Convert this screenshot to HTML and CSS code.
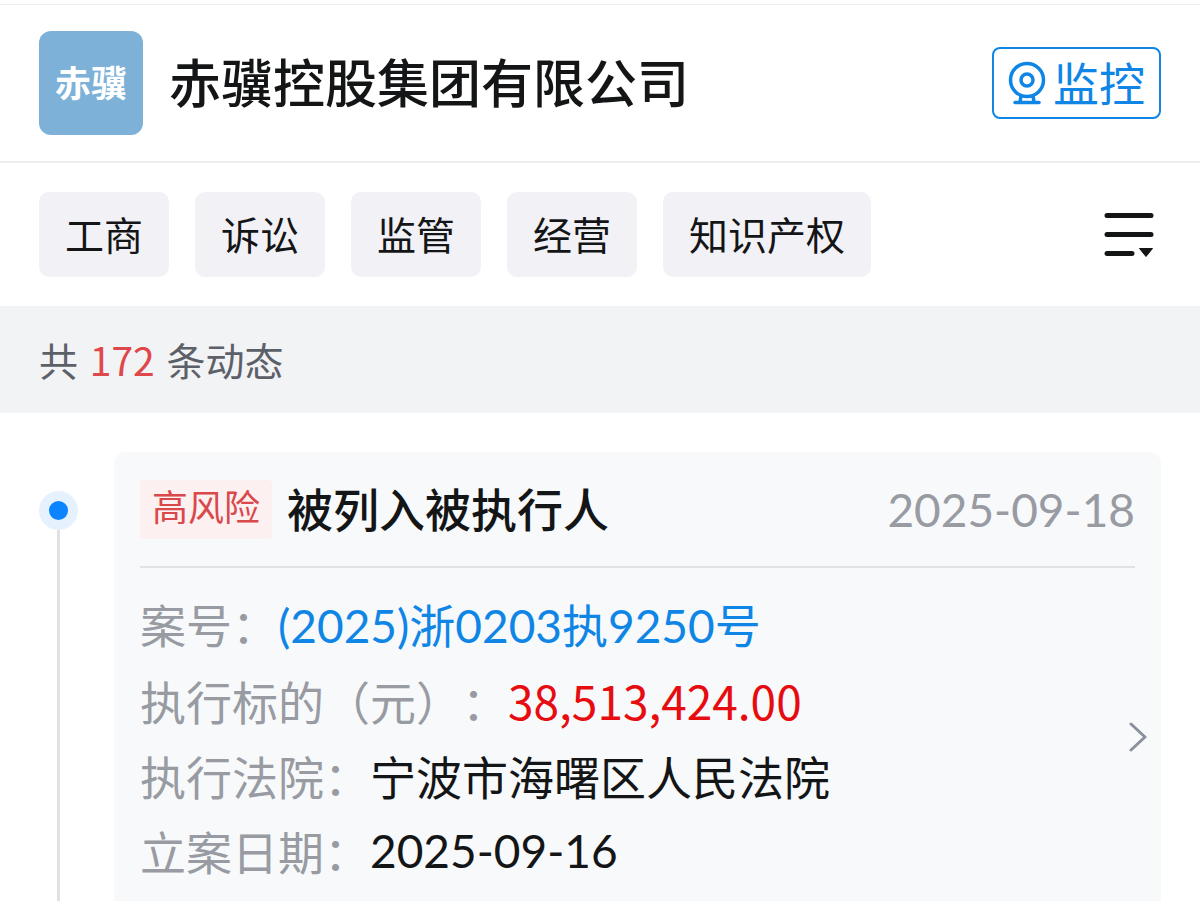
FILE: index.html
```html
<!DOCTYPE html>
<html lang="zh-CN">
<head>
<meta charset="utf-8">
<meta name="viewport" content="width=device-width, initial-scale=1">
<title>赤骥控股集团有限公司</title>
<link rel="stylesheet" href="styles.css">
</head>
<body>
<header class="company">
  <div class="logo">赤骥</div>
  <h1 class="company-name">赤骥控股集团有限公司</h1>
  <button class="monitor" type="button">
    <svg class="monitor-icon" viewBox="0 0 38 44" fill="none" stroke="currentColor" stroke-width="3.500" aria-hidden="true">
      <circle cx="19" cy="19" r="16.500"/>
      <circle cx="19" cy="19" r="6"/>
      <path d="M13 35l-1 6M25 35l1 6"/>
      <path d="M7 41.500h24" stroke-linecap="round"/>
    </svg>
    <span class="monitor-text">监控</span>
  </button>
</header>
<nav class="filters">
  <button class="chip" type="button">工商</button>
  <button class="chip" type="button">诉讼</button>
  <button class="chip" type="button">监管</button>
  <button class="chip" type="button">经营</button>
  <button class="chip" type="button">知识产权</button>
  <button class="more" type="button" aria-label="筛选">
    <svg class="more-icon" viewBox="0 0 50 46" aria-hidden="true">
      <path d="M3 3.500h44M3 22.500h44M3 41.500h25" fill="none" stroke="#141516" stroke-width="5" stroke-linecap="round"/>
      <path d="M35.500 36.500h13L42 44.500z" fill="#141516" stroke="#141516" stroke-linejoin="round"/>
    </svg>
  </button>
</nav>
<p class="summary">共 <span class="count">172</span> 条动态</p>
<main class="timeline">
  <div class="rail"><span class="dot"></span></div>
  <article class="card">
    <div class="card-head">
      <span class="tag">高风险</span>
      <h2 class="card-title">被列入被执行人</h2>
      <time class="card-date">2025-09-18</time>
    </div>
    <div class="card-body">
      <dl class="fields">
        <div class="field"><dt>案号：</dt><dd><a class="case-link" href="#">(2025)浙0203执9250号</a></dd></div>
        <div class="field"><dt>执行标的（元）：</dt><dd class="amount">38,513,424.00</dd></div>
        <div class="field"><dt>执行法院：</dt><dd>宁波市海曙区人民法院</dd></div>
        <div class="field"><dt>立案日期：</dt><dd class="date">2025-09-16</dd></div>
      </dl>
      <svg class="chevron" viewBox="0 0 18 30" fill="none" stroke="#8b919c" stroke-width="3" stroke-linecap="round" stroke-linejoin="round" aria-hidden="true"><path d="M2 2l14 13L2 28"/></svg>
    </div>
  </article>
</main>
</body>
</html>
```
FILE: styles.css
```css
* { box-sizing: border-box; }
body {
  margin: 0;
  min-height: 100vh;
  display: flex;
  flex-direction: column;
  background: #fff;
  color: #141516;
  font-family: "Noto Sans CJK SC", sans-serif;
  text-spacing-trim: space-all;
}
button {
  margin: 0;
  border: 0;
  background: none;
  color: inherit;
  font-family: inherit;
  cursor: pointer;
}
h1, h2, p, dl, dd { margin: 0; }

.company {
  display: flex;
  align-items: center;
  margin-top: 4px;
  padding: 26px 39px;
  border-top: 1px solid #eee;
  border-bottom: 2px solid #eeeeef;
}
.logo {
  width: 104px;
  height: 104px;
  border-radius: 12px;
  background: #7db1d8;
  color: #fff;
  font-size: 36px;
  font-weight: 700;
  line-height: 100px;
  text-align: center;
}
.company-name {
  flex: 1;
  padding: 0 0 4px 26px;
  font-size: 52px;
  font-weight: 500;
  line-height: 100px;
}
.monitor {
  display: flex;
  align-items: center;
  gap: 7px;
  height: 72px;
  padding: 0 14px;
  border: 2px solid #0f86e6;
  border-radius: 8px;
  color: #0f86e6;
  font-size: 46px;
}
.monitor-text {
  padding-bottom: 4px;
  line-height: 64px;
}
.monitor-icon { width: 38px; height: 44px; }

.filters {
  display: flex;
  align-items: center;
  gap: 26px;
  padding: 29px 39px;
}
.chip {
  height: 85px;
  padding: 0 26px 2px;
  border-radius: 10px;
  background: #f1f1f6;
  font-size: 39px;
  line-height: 83px;
}
.more { margin-left: auto; padding: 0 7px; }
.more-icon { display: block; width: 50px; height: 46px; }

.summary {
  padding: 0 39px;
  background: #f2f3f5;
  color: #5c6069;
  font-size: 39px;
  line-height: 107px;
}
.count {
  margin: 0 3px;
  color: #e0474a;
}

.timeline {
  flex: 1;
  display: flex;
  gap: 36px;
  padding: 39px 39px 0;
}
.rail {
  display: flex;
  flex-direction: column;
  align-items: center;
  width: 39px;
  padding-top: 39px;
}
.rail::after {
  content: "";
  flex: 1;
  width: 3px;
  background: #e0e1e3;
}
.dot {
  width: 39px;
  height: 39px;
  border: 10px solid #e5f2fe;
  border-radius: 50%;
  background: #0a84ff;
}
.card {
  flex: 1;
  padding: 0 26px;
  border-radius: 12px 12px 0 0;
  background: #f7f9fb;
}
.card-head {
  display: flex;
  align-items: center;
  height: 116px;
  border-bottom: 2px solid #e1e2e4;
}
.tag {
  padding: 0 12px 8px;
  border-radius: 4px;
  background: #fdf0f0;
  color: #d9484b;
  font-size: 36px;
  line-height: 51px;
}
.card-title {
  flex: 1;
  padding: 0 0 4px 15px;
  font-size: 46px;
  font-weight: 500;
}
.card-date {
  color: #999ba2;
  font-family: Lato, "Noto Sans CJK SC", sans-serif;
  font-size: 46px;
}
.card-body {
  display: flex;
  align-items: center;
  justify-content: space-between;
  margin-right: -12px;
  padding-top: 18px;
}
.field {
  display: flex;
  font-size: 46px;
  line-height: 75px;
}
.field dt { color: #989ba2; }
.case-link {
  color: #0f86e6;
  font-family: Lato, "Noto Sans CJK SC", sans-serif;
  text-decoration: none;
}
.amount { color: #e60c10; }
.date { font-family: Lato, "Noto Sans CJK SC", sans-serif; }
.chevron { width: 18px; height: 30px; }
```
